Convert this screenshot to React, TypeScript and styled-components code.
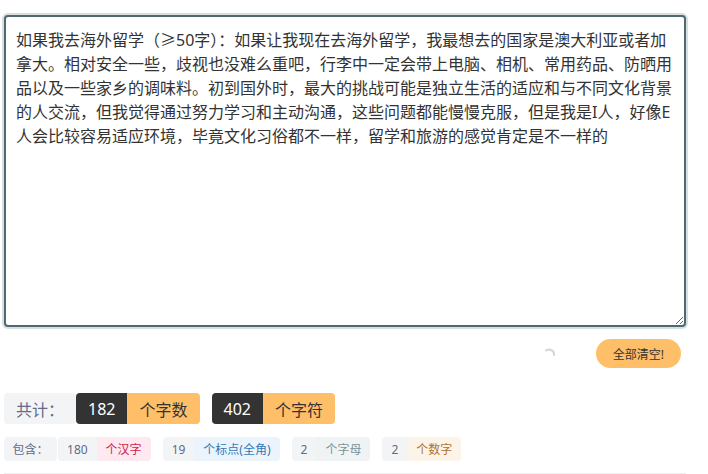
import styled, { createGlobalStyle } from 'styled-components'

const GlobalStyle = createGlobalStyle`
    body {
        margin: 0;
        background: #fff;
        font-family: "Noto Sans", "Noto Sans CJK SC", sans-serif;
        color: #333;
    }
`

const StyledPage = styled.div`
    width: 682px;
    padding: 15px 0 0 4px;
`

const StyledTextarea = styled.textarea`
    display: block;
    box-sizing: border-box;
    width: 682px;
    height: 312px;
    margin: 0;
    padding: 11px 10px;
    border: 2px solid #4f6970;
    border-radius: 4px;
    box-shadow: 0 0 0 2px #d7dfe1;
    outline: none;
    font-family: "Noto Sans", "Noto Sans CJK SC", sans-serif;
    font-size: 16px;
    line-height: 24px;
    color: #333;
`

const StyledActions = styled.div`
    display: flex;
    align-items: center;
    justify-content: flex-end;
    gap: 40px;
    margin-top: 12px;
    padding-right: 5px;
`

const StyledSpinner = styled.svg`
    width: 12px;
    height: 12px;
`

const StyledClearButton = styled.button`
    height: 29px;
    padding: 0 17px;
    border: none;
    border-radius: 15px;
    background-color: #ffbf69;
    color: #333;
    font-family: "Noto Sans", "Noto Sans CJK SC", sans-serif;
    font-size: 12px;
    cursor: pointer;
`

const StyledRow = styled.div<{ $top: number }>`
    display: flex;
    align-items: stretch;
    margin-top: ${p => p.$top}px;
`

const StyledGroup = styled.div<{ $gap: number }>`
    display: flex;
    margin-right: ${p => p.$gap}px;
`

const StyledLabel = styled.span<{ $big?: boolean }>`
    display: flex;
    align-items: center;
    height: ${p => (p.$big ? 31 : 24)}px;
    padding: 0 ${p => (p.$big ? 12 : 8.5)}px;
    margin-right: ${p => (p.$big ? 0 : 1)}px;
    background: #f3f4f5;
    border-radius: 4px;
    color: #5f6b8a;
    font-size: ${p => (p.$big ? 16 : 12)}px;
`

const StyledNum = styled.span<{ $big?: boolean }>`
    display: flex;
    align-items: center;
    height: ${p => (p.$big ? 31 : 24)}px;
    padding: 0 ${p => (p.$big ? 12 : 9)}px;
    border-radius: 4px 0 0 4px;
    background: ${p => (p.$big ? '#333' : '#f3f4f5')};
    color: ${p => (p.$big ? '#fff' : '#5f6b8a')};
    font-size: ${p => (p.$big ? 16 : 12)}px;
`

const StyledUnit = styled.span<{ $big?: boolean; $bg: string; $fg: string }>`
    display: flex;
    align-items: center;
    height: ${p => (p.$big ? 31 : 24)}px;
    padding: 0 ${p => (p.$big ? 12 : 9)}px;
    border-radius: 0 4px 4px 0;
    background: ${p => p.$bg};
    color: ${p => p.$fg};
    font-size: ${p => (p.$big ? 16 : 12)}px;
`

const StyledRule = styled.div`
    height: 1px;
    margin-top: 12px;
    background: #eeeeee;
`

const text =
    '如果我去海外留学（≥50字）：如果让我现在去海外留学，我最想去的国家是澳大利亚或者加拿大。相对安全一些，歧视也没难么重吧，行李中一定会带上电脑、相机、常用药品、防晒用品以及一些家乡的调味料。初到国外时，最大的挑战可能是独立生活的适应和与不同文化背景的人交流，但我觉得通过努力学习和主动沟通，这些问题都能慢慢克服，但是我是I人，好像E人会比较容易适应环境，毕竟文化习俗都不一样，留学和旅游的感觉肯定是不一样的'

const details = [
    { num: 180, unit: '个汉字', bg: '#fde9ef', fg: '#d4204d' },
    { num: 19, unit: '个标点(全角)', bg: '#ebf4fc', fg: '#2f78b8' },
    { num: 2, unit: '个字母', bg: '#eff3f4', fg: '#7a9398' },
    { num: 2, unit: '个数字', bg: '#fdf4e9', fg: '#b0732a' },
]

function App() {
    return (
        <>
            <GlobalStyle />
            <StyledPage>
                <StyledTextarea defaultValue={text} spellCheck={false} />
                <StyledActions>
                    <StyledSpinner viewBox="0 0 12 12">
                        <path d="M2 2.5 A5 5 0 0 1 10 7" fill="none" stroke="#d4d4d4" strokeWidth="2" strokeLinecap="round" />
                    </StyledSpinner>
                    <StyledClearButton>全部清空!</StyledClearButton>
                </StyledActions>

                <StyledRow $top={25}>
                    <StyledLabel $big>共计：</StyledLabel>
                    <StyledGroup $gap={12}>
                        <StyledNum $big>182</StyledNum>
                        <StyledUnit $big $bg="#ffbf69" $fg="#333">个字数</StyledUnit>
                    </StyledGroup>
                    <StyledGroup $gap={0}>
                        <StyledNum $big>402</StyledNum>
                        <StyledUnit $big $bg="#ffbf69" $fg="#333">个字符</StyledUnit>
                    </StyledGroup>
                </StyledRow>

                <StyledRow $top={13}>
                    <StyledLabel>包含：</StyledLabel>
                    {details.map(d => (
                        <StyledGroup $gap={12} key={d.unit}>
                            <StyledNum>{d.num}</StyledNum>
                            <StyledUnit $bg={d.bg} $fg={d.fg}>{d.unit}</StyledUnit>
                        </StyledGroup>
                    ))}
                </StyledRow>
                <StyledRule />
            </StyledPage>
        </>
    )
}

export default App
